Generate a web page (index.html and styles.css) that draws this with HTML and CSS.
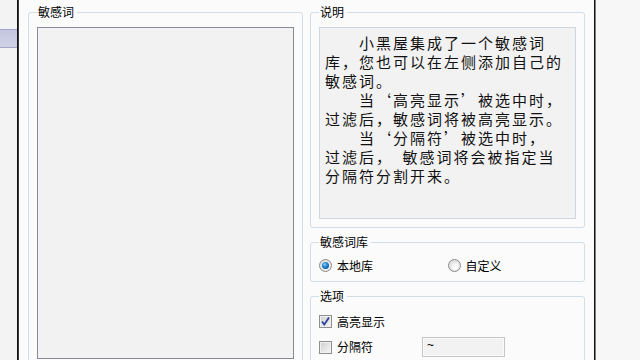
FILE: index.html
```html
<!DOCTYPE html>
<html lang="zh-CN">
<head>
<meta charset="utf-8">
<link rel="stylesheet" href="styles.css">
</head>
<body>
<div class="screen">
  <div class="strip"><div class="tab"></div></div>
  <div class="vline"></div>
  <div class="panel">
    <fieldset class="group words">
      <legend>敏感词</legend>
      <div class="listbox"></div>
    </fieldset>
    <div class="col">
      <fieldset class="group desc">
        <legend>说明</legend>
        <div class="memo">　　小黑屋集成了一个敏感词<br>库，您也可以在左侧添加自己的<br>敏感词。<br>　　当‘高亮显示’被选中时，<br>过滤后，敏感词将被高亮显示。<br>　　当‘分隔符’被选中时，<br>过滤后，&#8194;敏感词将会被指定当<br>分隔符分割开来。</div>
      </fieldset>
      <fieldset class="group lib">
        <legend>敏感词库</legend>
        <div class="radios">
          <div class="opt radio-opt"><span class="radio on"><span class="dot"></span></span><span class="lbl">本地库</span></div>
          <div class="opt radio-opt"><span class="radio"></span><span class="lbl">自定义</span></div>
        </div>
      </fieldset>
      <fieldset class="group opts">
        <legend>选项</legend>
        <div class="opt row1">
          <span class="check on"><svg width="11" height="11" viewBox="0 0 11 11"><path d="M2 5.5 L4.3 8.5 L9 1.5" fill="none" stroke="#2a3f9c" stroke-width="1.8"/></svg></span><span class="lbl">高亮显示</span>
        </div>
        <div class="opt row2">
          <div class="sep-label"><span class="check"></span><span class="lbl">分隔符</span></div>
          <div class="edit">~</div>
        </div>
      </fieldset>
    </div>
  </div>
  <div class="vline right"></div>
  <div class="rest"></div>
</div>
</body>
</html>
```
FILE: styles.css
```css
html, body {
  margin: 0;
  padding: 0;
  width: 640px;
  height: 360px;
  overflow: hidden;
  background: #f7f7f7;
}
.screen {
  display: flex;
  width: 640px;
  height: 360px;
  font-family: "Noto Sans CJK SC", "DejaVu Sans", sans-serif;
  color: #000;
  overflow: hidden;
}
.strip {
  width: 17px;
  flex: none;
  background: #f3f3f3;
  padding-top: 29px;
  box-sizing: border-box;
}
.tab {
  height: 17px;
  background: linear-gradient(#c4c6e0, #d0d2e8);
  border-top: 1px solid #a3a6cc;
  border-bottom: 1px solid #a3a6cc;
}
.vline {
  width: 2px;
  flex: none;
  background: linear-gradient(to right, #111 0 1px, #3a3a3a 1px 2px);
}
.vline.right {
  background: linear-gradient(to right, #111 0 1px, #808080 1px 2px);
}
.panel {
  width: 575px;
  flex: none;
  background: #fbfbfb;
  box-sizing: border-box;
  padding: 5px 9px 0 9px;
  display: flex;
  gap: 7px;
  align-items: flex-start;
}
.rest {
  flex: 1;
  background: #f7f7f7;
}
.group {
  margin: 0;
  min-width: 0;
  width: 275px;
  box-sizing: border-box;
  border: 1px solid #d3dde5;
  border-radius: 3px;
  padding: 0 8px;
}
.group legend {
  font-size: 12px;
  line-height: 14px;
  padding: 0 3px 0 1px;
  margin-left: 0;
}
.listbox {
  margin-top: 8px;
  height: 332px;
  width: 257px;
  box-sizing: border-box;
  border: 1px solid #868b94;
  background: #f2f2f2;
  margin-bottom: 20px;
}
.col {
  display: flex;
  flex-direction: column;
  gap: 7px;
  width: 275px;
}
.desc {
  padding-bottom: 8px;
}
.memo {
  margin-top: 8px;
  height: 192px;
  box-sizing: border-box;
  border: 1px solid #cdd7df;
  background: #f2f2f2;
  padding: 5px 5px 0 5px;
  font-size: 15px;
  line-height: 19px;
  letter-spacing: 2px;
  white-space: nowrap;
  color: #111;
}
.lib {
  padding-bottom: 6px;
}
.radios {
  margin-top: 7px;
  display: flex;
  height: 19px;
  align-items: center;
}
.opt {
  display: flex;
  align-items: center;
  font-size: 12px;
  line-height: 14px;
}
.radio-opt {
  width: 131px;
}
.lbl {
  margin-left: 5px;
}
.radio {
  width: 13px;
  height: 13px;
  box-sizing: border-box;
  border-radius: 50%;
  border: 1px solid #8a8a8a;
  background: radial-gradient(circle at 62% 66%, #fbfbfb 0 25%, #c4c4c4 100%);
  box-shadow: inset 0 0 0 1px #e6e6e6;
  display: flex;
  align-items: center;
  justify-content: center;
  flex: none;
}
.dot {
  width: 7px;
  height: 7px;
  border-radius: 50%;
  background: radial-gradient(circle at 40% 35%, #8fd0f8 0, #1f86d6 40%, #0a3a78 100%);
}
.opts {
  padding-bottom: 10px;
}
.row1 {
  margin-top: 9px;
  height: 19px;
}
.row2 {
  margin-top: 6px;
  height: 20px;
}
.sep-label {
  width: 103px;
  display: flex;
  align-items: center;
}
.check {
  width: 13px;
  height: 13px;
  box-sizing: border-box;
  border: 1px solid #8e8f90;
  background: linear-gradient(135deg, #d0d0d0, #f6f6f6);
  box-shadow: inset 0 0 0 1px #f0f0f0;
  display: flex;
  align-items: center;
  justify-content: center;
  flex: none;
}
.check svg {
  display: block;
}
.edit {
  width: 83px;
  height: 20px;
  box-sizing: border-box;
  border: 1px solid #c3c6ca;
  background: #f2f2f2;
  box-shadow: inset 0 0 0 1px #fafafa;
  font-family: "Liberation Sans", sans-serif;
  font-size: 12px;
  line-height: 12px;
  padding: 1px 0 0 4px;
}
```
